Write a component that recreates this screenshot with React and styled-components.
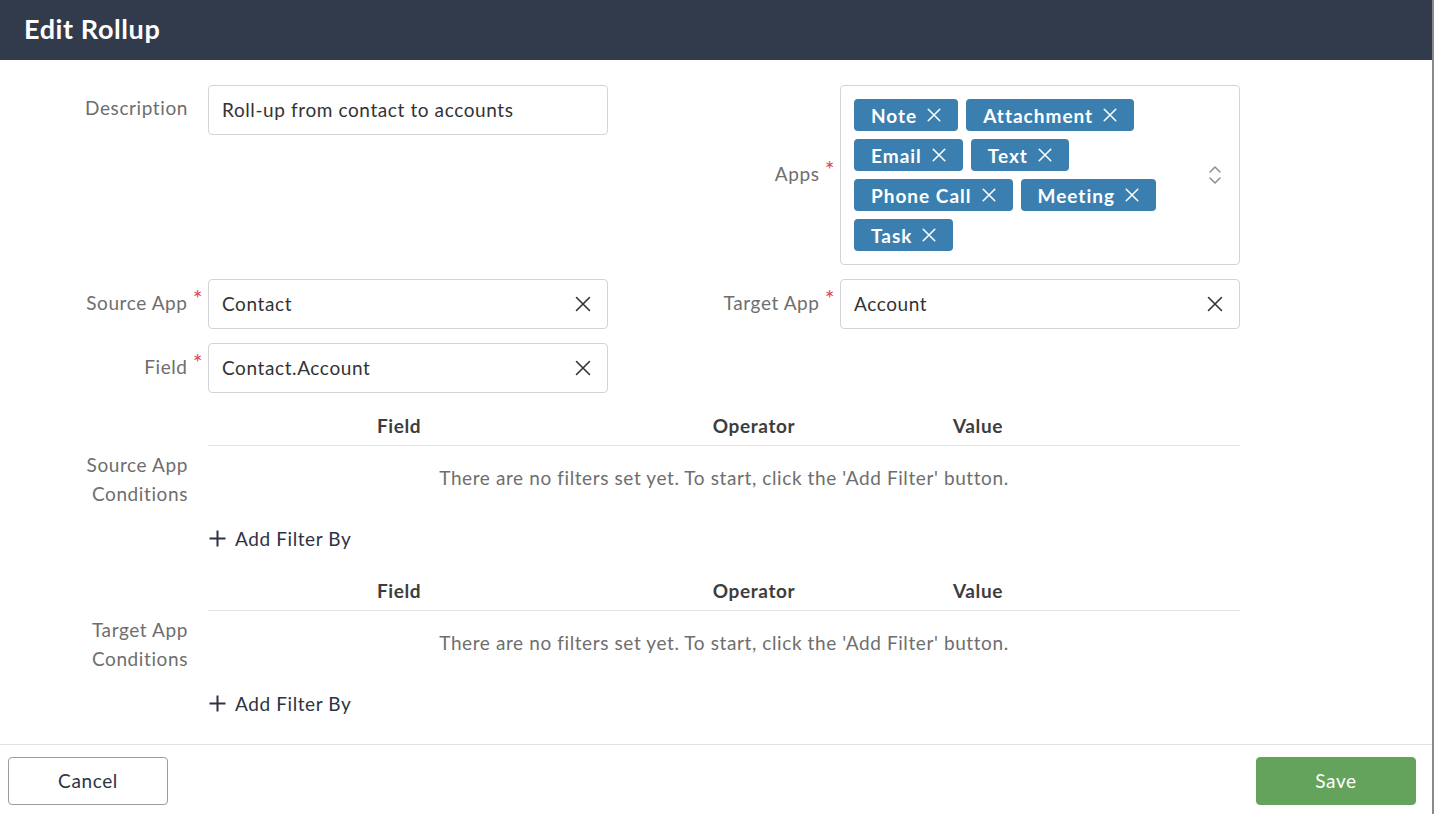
import React from "react";
import styled, { createGlobalStyle } from "styled-components";

const Global = createGlobalStyle`
  html, body { margin: 0; padding: 0; }
  body {
    background: #8a8a8a;
    font-family: Lato, "Open Sans", "Liberation Sans", sans-serif;
    letter-spacing: 0.6px;
    -webkit-font-smoothing: antialiased;
  }
  * { box-sizing: border-box; }
`;

const Modal = styled.div`
  width: 1432px;
  height: 814px;
  background: #fff;
  display: flex;
  flex-direction: column;
`;

const Header = styled.header`
  height: 60px;
  flex: none;
  background: #323b4c;
  color: #fff;
  display: flex;
  align-items: center;
  padding-left: 24px;
  font-size: 27px;
  font-weight: 700;
  padding-bottom: 4px;
`;

const Body = styled.div`
  flex: 1;
  padding: 25px 0 0 0;
`;

const FormGrid = styled.div`
  display: grid;
  grid-template-columns: 208px 400px 232px 400px;
  row-gap: 14px;
`;

const Label = styled.label`
  display: flex;
  justify-content: flex-end;
  align-items: ${(p) => (p.$center ? "center" : "flex-start")};
  padding-top: ${(p) => (p.$center ? "0" : p.$req ? "10px" : "11px")};
  padding-bottom: ${(p) => (p.$center ? "4px" : "0")};
  padding-right: ${(p) => (p.$req ? "5px" : "20px")};
  font-size: 19px;
  color: #6e6e6e;
  line-height: 24px;
  text-align: right;
`;

const Star = styled.span`
  color: #e0475b;
  font-size: 23px;
  margin-left: 5px;
  position: relative;
  top: -3px;
`;

const Input = styled.div`
  height: 50px;
  border: 1px solid #d3d4d9;
  border-radius: 4px;
  display: flex;
  align-items: center;
  padding: 0 15px 2px 13px;
  font-size: 19px;
  color: #333;
  justify-content: space-between;
`;

const Clear = styled.span`
  display: flex;
  color: #333;
  padding-top: 2px;
`;

const TagBox = styled.div`
  border: 1px solid #d3d4d9;
  border-radius: 4px;
  min-height: 180px;
  padding: 13px 17px 13px 13px;
  display: flex;
  align-items: center;
  justify-content: space-between;
`;

const Tags = styled.div`
  width: 330px;
  display: flex;
  flex-wrap: wrap;
  gap: 8px 8px;
  align-content: flex-start;
  align-self: flex-start;
`;

const Tag = styled.span`
  height: 32px;
  background: #3a7fb0;
  border-radius: 4px;
  color: #fff;
  font-weight: 700;
  font-size: 19px;
  letter-spacing: 1px;
  display: inline-flex;
  align-items: center;
  gap: 9px;
  padding: 0 16px 0 17px;
`;

const Blank = styled.div``;

const Section = styled.div`
  display: grid;
  grid-template-columns: 208px 1032px;
  margin-top: ${(p) => p.$top}px;
`;

const SideLabel = styled.div`
  grid-row: 1 / span 3;
  font-size: 19px;
  color: #6e6e6e;
  text-align: right;
  padding-right: 20px;
  line-height: 29px;
  padding-top: 41px;
`;

const TableHead = styled.div`
  display: grid;
  grid-template-columns: 382px 328px 120px 1fr;
  height: 37px;
  padding-bottom: 3px;
  border-bottom: 1px solid #e2e3e6;
  font-size: 19px;
  font-weight: 700;
  color: #3d3d3d;
  align-items: center;
  text-align: center;
`;

const Empty = styled.div`
  grid-column: 2;
  text-align: center;
  font-size: 19px;
  line-height: 24px;
  color: #6e6e6e;
  padding-top: 20px;
  height: 76px;
`;

const AddFilter = styled.button`
  grid-column: 2;
  justify-self: start;
  border: 0;
  background: none;
  padding: 0;
  font: inherit;
  letter-spacing: 0.6px;
  font-size: 19px;
  color: #2c3344;
  display: inline-flex;
  align-items: center;
  gap: 8px;
  height: 32px;
`;

const Footer = styled.footer`
  flex: none;
  height: 70px;
  border-top: 1px solid #e2e3e6;
  display: flex;
  justify-content: space-between;
  align-items: flex-start;
  padding: 12px 16px 0 8px;
`;

const Btn = styled.button`
  width: 160px;
  height: 48px;
  border-radius: 4px;
  font: inherit;
  letter-spacing: 0.6px;
  font-size: 19px;
  padding-bottom: 2px;
  border: 1px solid ${(p) => (p.$primary ? "#63a35c" : "#9c9ca4")};
  background: ${(p) => (p.$primary ? "#63a35c" : "#fff")};
  color: ${(p) => (p.$primary ? "#fff" : "#2c3344")};
`;

const X = ({ size = 18, w = 1.6 }) => (
  <svg width={size} height={size} viewBox="0 0 18 18" fill="none">
    <path d="M2.5 2.5 L15.5 15.5 M15.5 2.5 L2.5 15.5" stroke="currentColor" strokeWidth={w} strokeLinecap="round" />
  </svg>
);

const UpDown = () => (
  <svg width="14" height="20" viewBox="0 0 14 20" fill="none">
    <path d="M2 7 L7 2 L12 7 M2 13 L7 18 L12 13" stroke="#8b8d96" strokeWidth="1.5" strokeLinecap="round" strokeLinejoin="round" />
  </svg>
);

const Plus = () => (
  <svg width="19" height="19" viewBox="0 0 19 19" fill="none">
    <path d="M9.5 1.5 V17.5 M1.5 9.5 H17.5" stroke="#2c3344" strokeWidth="2" />
  </svg>
);

const apps = ["Note", "Attachment", "Email", "Text", "Phone Call", "Meeting", "Task"];

const CondSection = ({ first, second, top }) => (
  <Section $top={top}>
    <SideLabel>
      {first}
      <br />
      {second}
    </SideLabel>
    <TableHead>
      <span>Field</span>
      <span>Operator</span>
      <span>Value</span>
      <span />
    </TableHead>
    <Empty>There are no filters set yet. To start, click the 'Add Filter' button.</Empty>
    <AddFilter>
      <Plus />
      Add Filter By
    </AddFilter>
  </Section>
);

export default function App() {
  return (
    <>
      <Global />
      <Modal>
        <Header>Edit Rollup</Header>
        <Body>
          <FormGrid>
            <Label>Description</Label>
            <Input>Roll-up from contact to accounts</Input>
            <Label $center $req>
              <span>
                Apps<Star>*</Star>
              </span>
            </Label>
            <TagBox>
              <Tags>
                {apps.map((a) => (
                  <Tag key={a}>
                    {a}
                    <X size={16} w={1.7} />
                  </Tag>
                ))}
              </Tags>
              <UpDown />
            </TagBox>

            <Label $req>
              <span>
                Source App<Star>*</Star>
              </span>
            </Label>
            <Input>
              Contact
              <Clear>
                <X />
              </Clear>
            </Input>
            <Label $req>
              <span>
                Target App<Star>*</Star>
              </span>
            </Label>
            <Input>
              Account
              <Clear>
                <X />
              </Clear>
            </Input>

            <Label $req>
              <span>
                Field<Star>*</Star>
              </span>
            </Label>
            <Input>
              Contact.Account
              <Clear>
                <X />
              </Clear>
            </Input>
            <Blank />
            <Blank />
          </FormGrid>
          <CondSection first="Source App" second="Conditions" top={16} />
          <CondSection first="Target App" second="Conditions" top={20} />
        </Body>
        <Footer>
          <Btn>Cancel</Btn>
          <Btn $primary>Save</Btn>
        </Footer>
      </Modal>
    </>
  );
}
